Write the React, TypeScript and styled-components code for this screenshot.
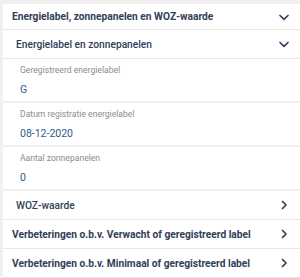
import styled, { createGlobalStyle } from 'styled-components';

const GlobalStyle = createGlobalStyle`
  html, body {
    margin: 0;
    padding: 0;
    background: #f0f0f0;
  }
  body {
    font-family: Roboto, 'Liberation Sans', sans-serif;
  }
`;

const FIELDS = [
  { label: 'Geregistreerd energielabel', value: 'G' },
  { label: 'Datum registratie energielabel', value: '08-12-2020' },
  { label: 'Aantal zonnepanelen', value: '0' },
];

function Chevron({ dir }: { dir: 'down' | 'right' }) {
  return (
    <svg width='12' height='12' viewBox='0 0 12 12' fill='none'>
      {dir === 'down' ? (
        <path d='M2 4.5l4 3.8 4-3.8' stroke='#2f4058' strokeWidth='1.7' strokeLinecap='round' strokeLinejoin='round' />
      ) : (
        <path d='M4.5 2.5l3.5 3.5-3.5 3.5' stroke='#2f4058' strokeWidth='1.7' strokeLinecap='round' strokeLinejoin='round' />
      )}
    </svg>
  );
}

export default function App() {
  return (
    <>
      <GlobalStyle />
      <Page>
        <Card>
          <Header $indent={12} $h={25}>
            <span>Energielabel, zonnepanelen en WOZ-waarde</span>
            <Chevron dir='down' />
          </Header>
          <Header $indent={16} $light>
            <span>Energielabel en zonnepanelen</span>
            <Chevron dir='down' />
          </Header>
          {FIELDS.map((f) => (
            <Field key={f.label}>
              <Label>{f.label}</Label>
              <Value>{f.value}</Value>
            </Field>
          ))}
          <Header $indent={16} $light>
            <span>WOZ-waarde</span>
            <Chevron dir='right' />
          </Header>
          <Header $indent={12}>
            <span>Verbeteringen o.b.v. Verwacht of geregistreerd label</span>
            <Chevron dir='right' />
          </Header>
          <Header $indent={12}>
            <span>Verbeteringen o.b.v. Minimaal of geregistreerd label</span>
            <Chevron dir='right' />
          </Header>
        </Card>
      </Page>
    </>
  );
}

const Page = styled.div`
  width: 300px;
  height: 278px;
  padding: 4px 0 0 3px;
  box-sizing: border-box;
  overflow: hidden;
`;

const Card = styled.div`
  background: #fff;
  display: flex;
  flex-direction: column;
`;

const Header = styled.div<{ $indent: number; $h?: number; $light?: boolean }>`
  height: ${({ $h }) => $h ?? 28}px;
  flex-shrink: 0;
  display: flex;
  align-items: center;
  justify-content: space-between;
  padding: 0 10px 0 ${({ $indent }) => $indent - 3}px;
  border-bottom: 1px solid #e6e6e6;
  font-size: 10.2px;
  font-weight: ${({ $light }) => ($light ? 500 : 700)};
  color: #2f4058;
  white-space: nowrap;
`;

const Field = styled.div`
  height: 41px;
  flex-shrink: 0;
  display: flex;
  flex-direction: column;
  justify-content: center;
  gap: 7px;
  padding: 1px 0 0 17px;
  border-bottom: 2px solid #f0f0f0;
`;

const Label = styled.div`
  font-size: 8.6px;
  color: #8c8c8c;
  line-height: 11px;
`;

const Value = styled.div`
  font-size: 10.5px;
  color: #2c5a8a;
  line-height: 13px;
`;
